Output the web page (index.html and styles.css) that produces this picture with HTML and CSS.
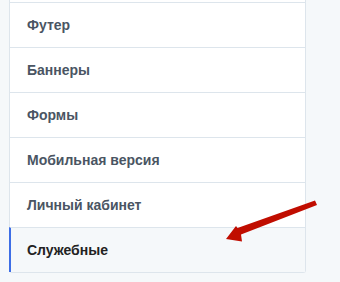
FILE: index.html
```html
<!DOCTYPE html>
<html>
<head>
  <title>Настройки</title>
  <meta charset="UTF-8">
  <link rel="stylesheet" href="styles.css">
</head>
<body>
  <div class="page">
    <ul class="menu">
      <li class="menu-item">Футер</li>
      <li class="menu-item">Баннеры</li>
      <li class="menu-item">Формы</li>
      <li class="menu-item">Мобильная версия</li>
      <li class="menu-item">Личный кабинет</li>
      <li class="menu-item active">Служебные</li>
    </ul>

    <!-- pointer arrow -->
    <svg class="arrow" width="100" height="50" viewBox="0 0 100 50">
      <polygon points="90,0.5 92,5 16,34.5 17,41.5 1,39 11,26 12.5,28" fill="#c00d00"/>
    </svg>
  </div>
</body>
</html>
```

FILE: styles.css
```css
body {
  margin: 0;
  font-family: "Liberation Sans", Arial, sans-serif;
  background-color: #f5f8fa;
}
.page {
  position: relative;
  padding-left: 9px;
  width: 297px;
}
.menu {
  list-style: none;
  margin: 0;
  padding: 2px 0 0 0;
  background-color: #fff;
  border: 1px solid #dde5ec;
  border-top: none;
  border-radius: 0 0 3px 3px;
}
.menu-item {
  height: 44px;
  line-height: 44px;
  padding-left: 17px;
  border-top: 1px solid #dde5ec;
  font-size: 14px;
  font-weight: bold;
  color: #4a5563;
}
.menu-item.active {
  background-color: #f5f8fa;
  color: #222;
  border-left: 2px solid #3d6ee6;
  padding-left: 16px;
  margin-left: -1px;
}
.arrow {
  position: absolute;
  left: 225px;
  top: 200px;
}
```
